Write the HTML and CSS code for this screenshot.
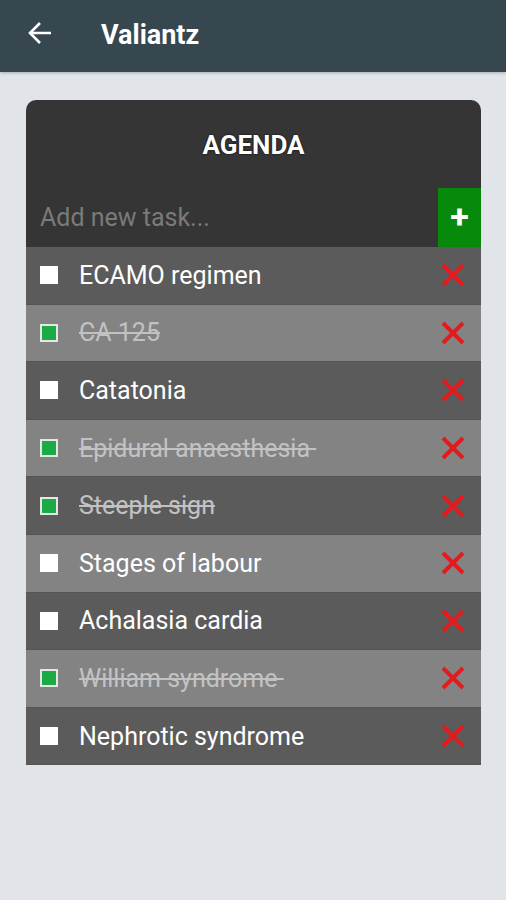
FILE: index.html
```html
<!DOCTYPE html>
<html lang="en">
<head>
    <meta charset="UTF-8">
    <meta name="viewport" content="width=device-width, initial-scale=1.0">
    <title>Valiantz</title>
    <link rel="stylesheet" href="styles.css">
</head>
<body>
    <div class="topbar">
        <svg class="back" width="26" height="24" viewBox="0 0 26 24">
            <path d="M24 12H3M13 2L3 12l10 10" fill="none" stroke="#fff" stroke-width="2.6"/>
        </svg>
        <span class="title">Valiantz</span>
    </div>

    <div class="card">
        <h1>AGENDA</h1>
        <div class="add-row">
            <input type="text" placeholder="Add new task...">
            <button class="add-btn">+</button>
        </div>
        <ul class="tasks" id="tasks"></ul>
    </div>

    <script>
        let tasks = [
            { name: "ECAMO regimen", done: false },
            { name: "CA 125", done: true },
            { name: "Catatonia", done: false },
            { name: "Epidural anaesthesia\u00a0", done: true },
            { name: "Steeple sign", done: true },
            { name: "Stages of labour", done: false },
            { name: "Achalasia cardia", done: false },
            { name: "William syndrome\u00a0", done: true },
            { name: "Nephrotic syndrome", done: false }
        ];

        let html = "";
        tasks.forEach(task => {
            html += `
                <li class="${task.done ? "done" : ""}">
                    <span class="box"></span>
                    <span class="name">${task.name}</span>
                    <svg class="del" width="26" height="26" viewBox="0 0 26 26">
                        <path d="M3 3L23 23M23 3L3 23" stroke="#e21b1e" stroke-width="4"/>
                    </svg>
                </li>
            `;
        });
        document.getElementById("tasks").innerHTML = html;
    </script>
</body>
</html>
```

FILE: styles.css
```css
body {
    margin: 0;
    font-family: Roboto, "Liberation Sans", sans-serif;
    background-color: #e1e4e9;
}
.topbar {
    height: 72px;
    background-color: #37474f;
    display: flex;
    align-items: center;
    padding-left: 27px;
    box-shadow: 0 1px 3px rgba(0, 0, 0, 0.25);
}
.back {
    margin-top: -6px;
}
.title {
    color: white;
    font-size: 27px;
    font-weight: bold;
    margin-left: 48px;
    margin-top: -3px;
}
.card {
    margin: 28px 25px 0 26px;
    background-color: #353535;
    border-radius: 10px 10px 0 0;
    overflow: hidden;
}
h1 {
    margin: 0;
    height: 88px;
    line-height: 90px;
    text-align: center;
    color: white;
    font-size: 26px;
    font-weight: bold;
    text-shadow: 0 0 2px #000;
}
.add-row {
    display: flex;
    height: 59px;
}
.add-row input {
    flex: 1;
    min-width: 0;
    background: transparent;
    border: none;
    outline: none;
    color: white;
    font-family: inherit;
    font-size: 25px;
    padding: 0 0 0 14px;
}
.add-row input::placeholder {
    color: #7a7a7a;
}
.add-btn {
    width: 43px;
    border: none;
    background-color: #078a0c;
    color: white;
    font-family: inherit;
    font-size: 34px;
    font-weight: bold;
    padding: 0 0 4px 0;
}
.tasks {
    list-style: none;
    margin: 0;
    padding: 0;
}
.tasks li {
    display: flex;
    align-items: center;
    height: 57.6px;
    padding-left: 14px;
    background-color: #5b5b5b;
    border-bottom: 1px solid #555;
    box-sizing: border-box;
}
.tasks li:nth-child(even) {
    background-color: #838383;
}
.box {
    width: 18px;
    height: 18px;
    background-color: white;
    box-sizing: border-box;
}
.done .box {
    background-color: #1bab45;
    border: 2px solid #e6e6e6;
}
.name {
    flex: 1;
    margin-left: 21px;
    color: white;
    font-size: 25px;
}
.done .name {
    color: #c2c2c2;
    text-decoration: line-through;
}
.del {
    margin-right: 15px;
}
```
